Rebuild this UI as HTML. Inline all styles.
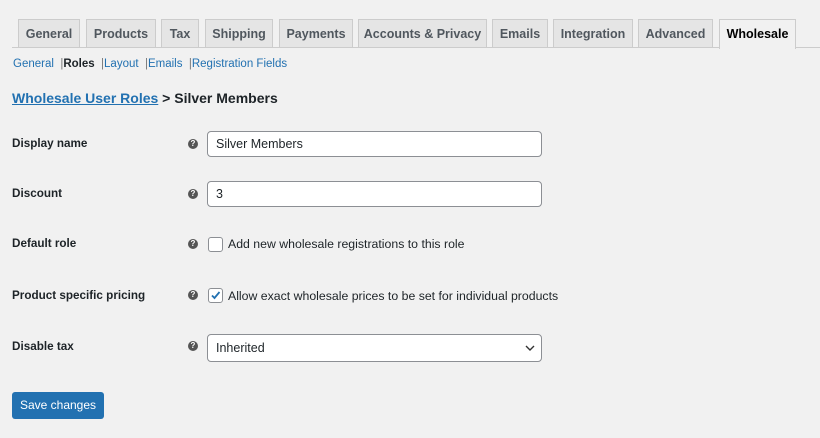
<!DOCTYPE html>
<html><head><style>
body{margin:0;width:820px;height:438px;background:#f1f1f1;font-family:"Liberation Sans",sans-serif;color:#1d2327;position:relative;overflow:hidden}
.t{position:absolute;top:19px;height:28px;background:#e5e5e5;border:1px solid #ccc;border-bottom:none;font-size:12.5px;font-weight:bold;color:#50575e;text-align:center;line-height:28px;box-sizing:border-box}
.t.a{background:#f1f1f1;color:#000;height:30px}
.line{position:absolute;left:12px;right:0;top:47px;border-top:1px solid #ccc}
.sub{position:absolute;top:58px;left:13px;font-size:11.5px;color:#2271b1;white-space:pre}
.sub b{color:#1d2327}
.sub span{color:#777}
h2{position:absolute;top:90px;left:12px;margin:0;font-size:14px;font-weight:bold}
h2 a{color:#2271b1;text-decoration:underline}
.l{position:absolute;left:12px;font-size:11.7px;font-weight:bold}
.q{position:absolute;left:188px;width:10px;height:10px;border-radius:50%;background:#555;color:#fff;font-size:8px;font-weight:bold;text-align:center;line-height:10px}
.in{position:absolute;left:207px;width:335px;height:26px;background:#fff;border:1px solid #8c8f94;border-radius:4px;box-sizing:border-box;font-size:12.5px;padding-left:8px;line-height:24px}
.cb{position:absolute;left:208px;width:13px;height:13px;border:1px solid #8c8f94;border-radius:3px;background:#fff}
.ct{position:absolute;left:228px;font-size:12.3px}
.btn{position:absolute;left:12px;top:392px;width:92px;height:27px;background:#2271b1;border-radius:3px;color:#fff;font-size:12px;text-align:center;line-height:27px}
</style></head><body>
<div class="line"></div>
<div class="t" style="left:18px;width:62px">General</div>
<div class="t" style="left:86px;width:70px">Products</div>
<div class="t" style="left:161px;width:38px">Tax</div>
<div class="t" style="left:205px;width:68px">Shipping</div>
<div class="t" style="left:279px;width:74px">Payments</div>
<div class="t" style="left:358px;width:129px">Accounts &amp; Privacy</div>
<div class="t" style="left:492px;width:56px">Emails</div>
<div class="t" style="left:553px;width:80px">Integration</div>
<div class="t" style="left:638px;width:75px">Advanced</div>
<div class="t a" style="left:719px;width:77px">Wholesale</div>
<div class="sub">General  <span>|</span><b>Roles</b>  <span>|</span>Layout  <span>|</span>Emails  <span>|</span>Registration Fields</div>
<h2><a>Wholesale User Roles</a> &gt; Silver Members</h2>
<div class="l" style="top:137px">Display name</div><div class="q" style="top:139px">?</div>
<div class="in" style="top:131px">Silver Members</div>
<div class="l" style="top:187px">Discount</div><div class="q" style="top:189px">?</div>
<div class="in" style="top:181px">3</div>
<div class="l" style="top:237px">Default role</div><div class="q" style="top:239px">?</div>
<div class="cb" style="top:237px"></div><div class="ct" style="top:237px">Add new wholesale registrations to this role</div>
<div class="l" style="top:289px">Product specific pricing</div><div class="q" style="top:290px">?</div>
<div class="cb" style="top:288px"><svg width="13" height="13" viewBox="0 0 13 13"><path d="M3 6.5l2.5 2.5 5-6" stroke="#2271b1" stroke-width="1.8" fill="none"/></svg></div>
<div class="ct" style="top:289px">Allow exact wholesale prices to be set for individual products</div>
<div class="l" style="top:340px">Disable tax</div><div class="q" style="top:341px">?</div>
<div class="in" style="top:334px;height:28px;line-height:26px">Inherited<svg style="position:absolute;right:6px;top:10px" width="10" height="7" viewBox="0 0 10 7"><path d="M1 1l4 4 4-4" stroke="#333" stroke-width="1.4" fill="none"/></svg></div>
<div class="btn">Save changes</div>
</body></html>
